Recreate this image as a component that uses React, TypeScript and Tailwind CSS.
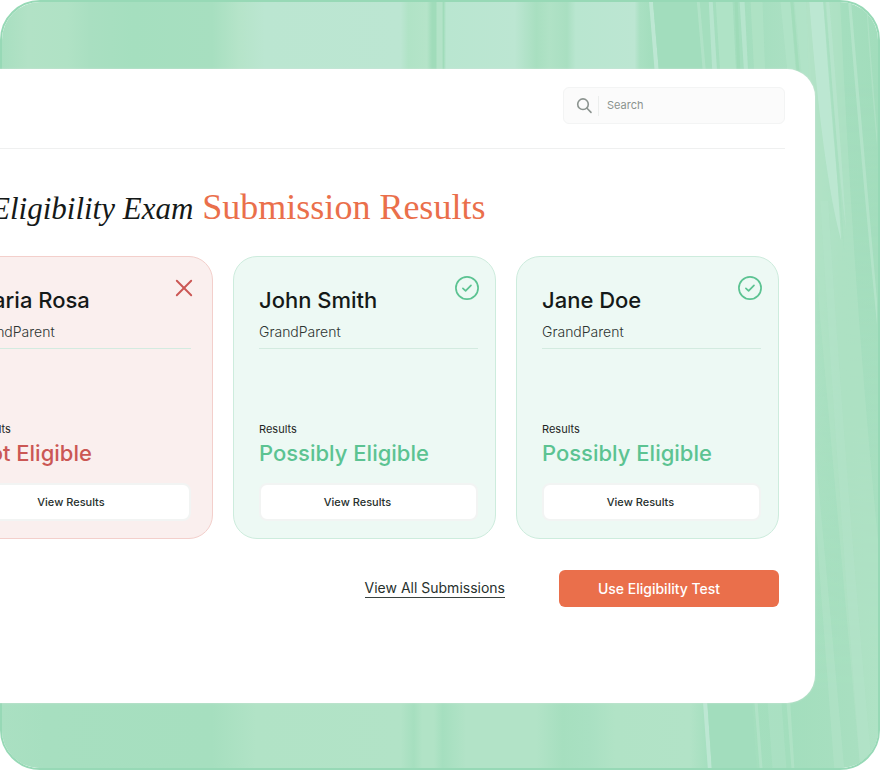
import { X } from "lucide-react";

type Submission = {
  name: string;
  relation: string;
  eligible: boolean;
};

const submissions: Submission[] = [
  { name: "Maria Rosa", relation: "GrandParent", eligible: false },
  { name: "John Smith", relation: "GrandParent", eligible: true },
  { name: "Jane Doe", relation: "GrandParent", eligible: true },
];

// [x offset (0-1), colour]
const topStops: [number, string][] = [
  [0, "#a8dfc0"], [0.03, "#b2e2c6"], [0.075, "#b0e2c5"], [0.1, "#a9dfc1"], [0.15, "#a5dfbf"],
  [0.24, "#a7dfc0"], [0.27, "#b5e4c9"], [0.3, "#bbe6d1"], [0.455, "#bce6d2"], [0.464, "#b0e3c6"],
  [0.485, "#b5e4c9"], [0.491, "#a0dcba"], [0.495, "#a0dcba"], [0.497, "#b3e3c8"], [0.502, "#b3e3c8"],
  [0.504, "#a0dcba"], [0.507, "#b9e6d0"], [0.585, "#bce6d2"], [0.61, "#a8dfc0"], [0.625, "#b0e2c6"],
  [0.645, "#a9dfc1"], [0.655, "#b9e6d0"], [0.722, "#bce6d2"], [0.728, "#a9e0c2"], [0.74, "#a4debe"],
  [0.85, "#a4debe"], [0.9, "#abe0c3"], [0.93, "#b0e2c6"], [0.96, "#a4debe"], [1, "#a2ddbc"],
];

const bottomStops: [number, string][] = [
  [0, "#aae0c2"], [0.05, "#a7dfc0"], [0.24, "#a6dfbf"], [0.29, "#b1e3c6"], [0.455, "#b2e3c7"],
  [0.47, "#a6dfbf"], [0.48, "#b1e3c6"], [0.493, "#b1e3c6"], [0.503, "#a5dfbf"], [0.53, "#b2e3c7"],
  [0.61, "#b2e3c7"], [0.64, "#a6dfbf"], [0.67, "#a9e0c2"], [0.7, "#b1e3c6"], [0.785, "#b2e3c7"],
  [0.805, "#a5dfbf"], [0.9, "#a3debd"], [0.97, "#a8dfc0"], [1, "#aae0c2"],
];

const streaks = [
  { d: "M650 0L654 0Q690 420 713 770L709 770Q684 420 650 0Z", fill: "#c0e8d5", opacity: 0.9 },
  { d: "M654 0L698 0Q735 420 758 770L713 770Q690 420 654 0Z", fill: "#a2ddbc", opacity: 0.9 },
  { d: "M698 0L701 0Q738 420 764 770L761 770Q734 420 698 0Z", fill: "#b5e4cb", opacity: 0.7 },
  { d: "M710 0L714 0L719 80L714 80Z", fill: "#bce6d2", opacity: 0.8 },
  { d: "M717 0L734 0L738 80L722 80Z", fill: "#b1e3c8", opacity: 0.8 },
  { d: "M736 0L739 0L742 80L739 80Z", fill: "#9cdab6", opacity: 0.8 },
  { d: "M741 0L746 0L750 80L746 80Z", fill: "#bae6d1", opacity: 0.8 },
  { d: "M752 0L764 0L767 80L756 80Z", fill: "#b0e2c6", opacity: 0.8 },
  { d: "M782 0L792 0L798 80L790 80Z", fill: "#b2e3c8", opacity: 0.8 },
  { d: "M792 0L795 0L802 80L799 80Z", fill: "#a0dcb9", opacity: 0.8 },
  { d: "M796 0L808 0Q812 60 816 120L808 120Q802 60 796 0Z", fill: "#b2e3c8", opacity: 0.8 },
  { d: "M808 0L842 0Q856 300 880 540L880 770L862 770Q838 500 815 240Z", fill: "#b2e3c7", opacity: 0.6 },
  { d: "M811 0L825 0Q836 120 843 240Q824 170 811 0Z", fill: "#bfe8d5", opacity: 0.8 },
  { d: "M825 0L827 0Q838 120 846 250Q834 130 825 0Z", fill: "#a6dfbf", opacity: 0.8 },
  { d: "M828 0L831 0Q842 130 848 230Q838 150 828 0Z", fill: "#b8e5cd", opacity: 0.8 },
  { d: "M850 0L853 0Q866 150 879 300L879 325Q863 160 850 0Z", fill: "#b7e5cc", opacity: 0.8 },
  { d: "M868 0L869 0Q874 70 879 130L879 145Q872 70 868 0Z", fill: "#b2e3c8", opacity: 0.7 },
  { d: "M822 200L830 200Q846 460 874 770L862 770Q838 460 822 200Z", fill: "#b4e4c9", opacity: 0.5 },
  { d: "M815 430Q830 590 846 770L836 770Q824 610 815 490Z", fill: "#b3e3c8", opacity: 0.6 },
  { d: "M768 690L782 690L788 770L774 770Z", fill: "#ace1c4", opacity: 0.7 },
  { d: "M787 690L791 690L796 770L793 770Z", fill: "#b4e4c9", opacity: 0.7 },
];

function Backdrop() {
  return (
    <div className="absolute inset-0 rounded-[40px] overflow-hidden border-2 border-[#97d9b6]">
      <svg className="w-full h-full" viewBox="0 0 880 770" preserveAspectRatio="none" aria-hidden="true">
        <defs>
          <linearGradient id="top">
            {topStops.map(([offset, color]) => (
              <stop key={offset} offset={offset} stopColor={color} />
            ))}
          </linearGradient>
          <linearGradient id="bottom">
            {bottomStops.map(([offset, color]) => (
              <stop key={offset} offset={offset} stopColor={color} />
            ))}
          </linearGradient>
          <linearGradient id="fade" x1="0" y1="0" x2="0" y2="1">
            <stop offset="0.1" stopColor="#000" />
            <stop offset="0.9" stopColor="#fff" />
          </linearGradient>
          <mask id="fadeMask">
            <rect width="880" height="770" fill="url(#fade)" />
          </mask>
        </defs>
        <rect width="880" height="770" fill="url(#top)" />
        <rect width="880" height="770" fill="url(#bottom)" mask="url(#fadeMask)" />
        {streaks.map((s) => (
          <path key={s.d} d={s.d} fill={s.fill} opacity={s.opacity} />
        ))}
      </svg>
    </div>
  );
}

function SearchIcon() {
  return (
    <svg
      className="w-[18px] h-[18px] text-[#8b938f]"
      viewBox="0 0 18 18"
      fill="none"
      stroke="currentColor"
      strokeWidth={1.6}
      strokeLinecap="round"
      aria-hidden="true"
    >
      <circle cx="7" cy="7.2" r="5.3" />
      <path d="M11 11.2l4 4.2" />
    </svg>
  );
}

function StatusIcon({ eligible }: { eligible: boolean }) {
  if (!eligible) {
    return <X className="w-6 h-6 text-[#cb5754]" strokeWidth={1.6} viewBox="2 2 20 20" />;
  }
  return (
    <svg className="w-6 h-6 text-[#5cc392]" viewBox="0 0 24 24" fill="none" stroke="currentColor" strokeWidth={1.7}>
      <circle cx="12" cy="12" r="11.1" />
      <path d="M7.9 12.3l2.7 2.5 5.4-5.5" strokeLinecap="round" strokeLinejoin="round" />
    </svg>
  );
}

function SubmissionCard({ name, relation, eligible }: Submission) {
  return (
    <article
      className={`relative rounded-3xl border pl-[25px] pt-[27px] pb-[17px] ${
        eligible ? "pr-[17px] bg-[#edf9f4] border-[#cdecdd]" : "pr-[21px] bg-[#faefee] border-[#f3cfcb]"
      }`}
    >
      <div className="absolute right-4 top-[19px]">
        <StatusIcon eligible={eligible} />
      </div>
      <h2 className="text-[22px] leading-8 font-medium text-[#151918]">{name}</h2>
      <p className="mt-[5px] pb-[5px] text-sm leading-[22px] font-light text-[#2d3432] border-b border-[#d3ebe0]">
        {relation}
      </p>

      <p className="mt-[72px] text-[11px] leading-4 text-[#1f2624]">Results</p>
      <p className={`text-[22px] leading-8 font-medium ${eligible ? "text-[#5cc392]" : "text-[#cb5754]"}`}>
        {eligible ? "Possibly Eligible" : "Not Eligible"}
      </p>
      <button className="mt-[14px] w-full h-[38px] pr-[22px] rounded-lg border-2 border-[#f2f4f3] bg-white text-[11px] font-medium text-[#27302d] cursor-pointer">
        View Results
      </button>
    </article>
  );
}

export default function App() {
  return (
    <div className="relative min-h-screen flex flex-col pt-[69px] pb-[67px] pr-[65px] overflow-hidden bg-white font-[Inter,sans-serif]">
      <Backdrop />

      {/* Main panel, runs off the left edge */}
      <main className="relative flex-1 -ml-[53px] pt-[18px] pr-[30px] bg-white rounded-r-[28px] shadow-[0_0_2px_#d5e5dc]">
        <header className="flex justify-end pb-6 border-b border-[#eff0f0]">
          <label className="flex items-center w-[222px] h-[37px] px-3 rounded-md border border-[#f3f4f4] bg-[#fbfbfb]">
            <SearchIcon />
            <span className="w-px h-5 ml-1 mr-2 bg-[#eceeed]" />
            <input
              type="search"
              placeholder="Search"
              aria-label="Search"
              className="min-w-0 flex-1 bg-transparent text-[11px] text-[#27302d] placeholder:text-[#8b938f] focus:outline-none"
            />
          </label>
        </header>

        <div className="pr-[6px]">
          <h1 className="mt-9 pl-[44px] text-[36px] leading-[44px] font-['Liberation_Serif',serif] text-[#ea6f4b] whitespace-nowrap">
            <em className="text-[31px] text-[#151918]">Eligibility Exam</em> Submission Results
          </h1>

          <section className="mt-[25px] grid grid-cols-[266fr_263fr_263fr] gap-x-5">
            {submissions.map((s) => (
              <SubmissionCard key={s.name} {...s} />
            ))}
          </section>

          <div className="mt-[31px] flex items-center justify-end gap-[54px]">
            <a href="#submissions" className="text-sm leading-[18px] text-[#27302d] border-b border-[#39423f]">
              View All Submissions
            </a>
            <button className="w-[220px] h-[37px] pr-5 rounded-md bg-[#ea6f4b] text-sm font-medium text-white cursor-pointer">
              Use Eligibility Test
            </button>
          </div>
        </div>
      </main>
    </div>
  );
}
